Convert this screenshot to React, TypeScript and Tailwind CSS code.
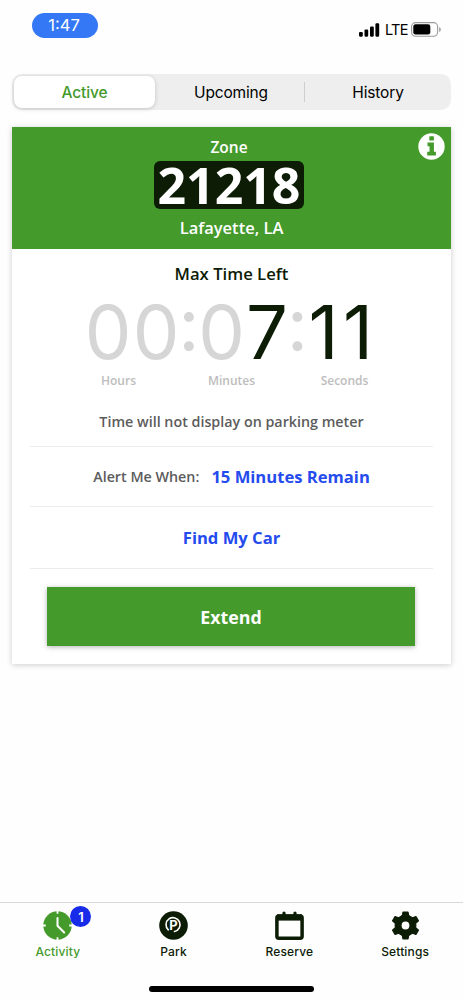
import { useState, type ReactNode } from "react";
import clsx from "clsx";

const TABS = ["Active", "Upcoming", "History"];

/* chaque caractère a sa propre largeur de cellule */
const TIMER = [
  { char: "0", cell: "w-12 text-[#d6d6d6]" },
  { char: "0", cell: "w-12 text-[#d6d6d6]" },
  { char: ":", cell: "w-[18px] -mt-[8px] text-[#d6d6d6]" },
  { char: "0", cell: "w-[47px] text-[#d6d6d6]" },
  { char: "7", cell: "w-[44px] text-[#0c1c05]" },
  { char: ":", cell: "w-[17px] -mt-[8px] text-[#d6d6d6]" },
  { char: "1", cell: "w-[35px] text-[#0c1c05]" },
  { char: "1", cell: "w-[34px] text-[#0c1c05]" },
];

/* ── Icons ── */
function SignalIcon() {
  return (
    <svg width="21" height="14" viewBox="0 0 21 14" fill="#000">
      <rect x="0" y="9" width="3.8" height="4.7" rx="1.1" />
      <rect x="5.5" y="6.5" width="3.7" height="7.2" rx="1.1" />
      <rect x="11" y="3.5" width="3.8" height="10.2" rx="1.1" />
      <rect x="16.4" y="0.3" width="3.8" height="13.4" rx="1.1" />
    </svg>
  );
}

function BatteryIcon() {
  return (
    <svg width="31" height="15" viewBox="0 0 31 15">
      <rect x="0.6" y="0.6" width="26" height="13.6" rx="4" fill="none" stroke="#9b9b9b" strokeWidth="1.1" />
      <rect x="2.3" y="2.3" width="17" height="10.2" rx="2.3" fill="#000" />
      <path d="M28.2 5v5c1.1-.4 1.6-1.3 1.6-2.5S29.3 5.4 28.2 5z" fill="#9b9b9b" />
    </svg>
  );
}

function InfoIcon() {
  return (
    <svg width="27" height="27" viewBox="0 0 27 27">
      <circle cx="13.5" cy="13.5" r="13.2" fill="#fff" />
      <rect x="11.3" y="3.3" width="4.6" height="4.2" rx="0.5" fill="#449a2b" />
      <path d="M9.5 9.5h6.4v9.300h2v3.700H9.200v-3.700h2.300v-5.600h-2z" fill="#449a2b" />
    </svg>
  );
}

function ClockIcon() {
  return (
    <svg width="29" height="29" viewBox="0 0 29 29">
      <circle cx="14.5" cy="14.5" r="14.2" fill="#449a2b" />
      <path d="M14.5 0v2.8M14.5 26.2V29M0 14.5h2.8M26.2 14.5H29" stroke="#fff" strokeWidth="1.8" />
      <path d="M14.5 7v7.8l6.7 6.700" fill="none" stroke="#fff" strokeWidth="2" strokeLinecap="round" />
    </svg>
  );
}

function ParkIcon() {
  return (
    <svg width="29" height="29" viewBox="0 0 29 29">
      <circle cx="14.5" cy="14.5" r="14.3" fill="#0c1c05" />
      <path d="M9.300 18.800A7 7 0 1 1 15.500 20.500" fill="none" stroke="#fff" strokeWidth="1.600" strokeLinecap="round" />
      <text x="14.5" y="19.400" textAnchor="middle" fontSize="13" fontWeight="700" fill="#fff" fontFamily="Inter, sans-serif">P</text>
    </svg>
  );
}

function CalendarIcon() {
  return (
    <svg width="29" height="29" viewBox="0 0 29 29" fill="none" stroke="#0c1c05">
      <rect x="1.9" y="5" width="25.2" height="22.2" rx="2" strokeWidth="3.5" />
      <path d="M2 6.500h25" strokeWidth="6.200" />
      <path d="M9 2v4M20 2v4" strokeWidth="3.200" strokeLinecap="round" />
    </svg>
  );
}

function GearIcon() {
  return (
    <svg width="29" height="29" viewBox="0 0 29 29">
      <g fill="#0c1c05" stroke="#0c1c05" strokeLinejoin="round">
        <circle cx="14.5" cy="14.5" r="10.5" />
        {[0, 60, 120].map((a) => (
          <path key={a} d="M12 1h5l1 5h-7zM12 28h5l1-5h-7z" transform={`rotate(${a} 14.5 14.5)`} strokeWidth="1.2" />
        ))}
      </g>
      <circle cx="14.5" cy="14.5" r="3.900" fill="#fefefe" />
    </svg>
  );
}

const NAV: { label: string; icon: ReactNode; badge?: number }[] = [
  { label: "Activity", icon: <ClockIcon />, badge: 1 },
  { label: "Park", icon: <ParkIcon /> },
  { label: "Reserve", icon: <CalendarIcon /> },
  { label: "Settings", icon: <GearIcon /> },
];

function StatusBar() {
  return (
    <div className="flex h-[74px] items-start justify-between pl-8 pr-[21px] pt-[13px]">
      <span className="flex h-[25px] w-[66px] items-center justify-center rounded-full bg-[#3478f6] pr-[2px] text-[16.5px] text-white">
        1:47
      </span>
      <div className="mt-[9px] flex items-center">
        <SignalIcon />
        <span className="ml-[5px] w-[26px] text-[14.5px] leading-[15px] tracking-[-0.7px]">LTE</span>
        <BatteryIcon />
      </div>
    </div>
  );
}

function Timer() {
  return (
    <div>
      <div className="ml-[72px] flex h-[68px] text-[74px] leading-[66px] font-normal">
        {TIMER.map((t, i) => (
          <span key={i} className={clsx("flex justify-center", t.cell)}>
            {t.char}
          </span>
        ))}
      </div>
      <div className="mt-[6px] ml-[50px] flex font-['Open_Sans'] text-xs leading-4 font-semibold text-[#bdbdbd]">
        <span className="w-[113px] text-center">Hours</span>
        <span className="w-[113px] text-center">Minutes</span>
        <span className="w-[113px] text-center">Seconds</span>
      </div>
    </div>
  );
}

function SessionCard() {
  return (
    <section className="mx-3 mt-[17px] h-[537px] bg-white font-['Open_Sans'] shadow-[0_1px_6px_rgba(0,0,0,0.2)]">
      <header className="relative flex h-[122px] flex-col items-center bg-[#449a2b] pr-[5px] text-white">
        <p className="mt-[10px] text-[15.5px] leading-5 font-semibold">Zone</p>
        <p className="mt-1 h-12 w-[150px] rounded-md bg-[#0c1c05] text-center text-[50px] leading-[48px] font-bold">
          21218
        </p>
        <p className="mt-[9px] pl-[5px] text-[16.5px] leading-5 font-semibold">Lafayette, LA</p>
        <div className="absolute top-[6px] right-[6px]">
          <InfoIcon />
        </div>
      </header>

      <h2 className="mt-[14px] text-center text-[16.7px] leading-[22px] font-semibold text-[#0c1c05]">Max Time Left</h2>
      <div className="mt-[14px] font-['Inter']">
        <Timer />
      </div>

      <div className="mx-[18px] flex flex-col items-center">
        <p className="mt-[23px] h-[34px] text-[14.3px] leading-5 font-semibold text-[#5c5c5c]">
          Time will not display on parking meter
        </p>
        <div className="flex h-[61px] w-full items-center justify-center border-y border-[#ececec] pt-px">
          <span className="text-[14.3px] font-semibold text-[#5c5c5c]">Alert Me When:</span>
          <a className="ml-3 text-[16.6px] font-bold text-[#244bed]">15 Minutes Remain</a>
        </div>
        <a className="flex h-[62px] w-full items-center justify-center border-b border-[#ececec] pt-[2px] text-[16.6px] font-bold text-[#244bed]">
          Find My Car
        </a>
      </div>

      <button className="mt-[18px] ml-[35px] h-[59px] w-[368px] bg-[#449a2b] pt-[2px] text-[17.8px] font-bold text-white shadow-[0_1px_5px_rgba(0,0,0,0.3)]">
        Extend
      </button>
    </section>
  );
}

export default function App() {
  const [active, setActive] = useState("Active");

  return (
    <div className="flex h-[1001px] w-[463px] flex-col overflow-hidden bg-[#fefefe] font-['Inter'] text-black">
      <StatusBar />

      {/* ── Onglets ── */}
      <div className="mx-3 flex h-9 items-center rounded-[10px] bg-[#eeeeee] px-[2px]">
        {TABS.map((tab, i) => (
          <button
            key={tab}
            onClick={() => setActive(tab)}
            className={clsx(
              "pt-px text-[15.5px] tracking-[-0.15px]",
              i === 0 && "h-8 w-[141px]",
              i === 1 && "h-8 w-[149px] pl-[3px]",
              i === 2 && "h-5 flex-1 border-l border-[#cfcfcf] pl-[2px] leading-5",
              active === tab && "rounded-lg bg-white font-medium text-[#449a2b] shadow-[0_1px_4px_rgba(0,0,0,0.18)]"
            )}
          >
            {tab}
          </button>
        ))}
      </div>

      <SessionCard />

      {/* ── Navigation ── */}
      <nav className="mt-auto flex h-[99px] flex-col items-center border-t border-[#d9d9d9]">
        <div className="flex w-full">
          {NAV.map((item) => (
            <a
              key={item.label}
              className={clsx(
                "flex w-1/4 flex-col items-center text-xs leading-4 font-medium",
                item.badge ? "text-[#449a2b]" : "text-[#0c1c05]"
              )}
            >
              <span className="relative mt-2 flex h-[29px] w-[29px] items-center justify-center">
                {item.icon}
                {item.badge && (
                  <span className="absolute -top-[5px] left-[27px] flex h-[21px] w-[21px] items-center justify-center rounded-full bg-[#182be8] text-[13px] font-semibold text-white">
                    {item.badge}
                  </span>
                )}
              </span>
              <span className="mt-1 tracking-[0.15px]">{item.label}</span>
            </a>
          ))}
        </div>
        <div className="mt-[26px] h-[6px] w-[165px] rounded-full bg-black" />
      </nav>
    </div>
  );
}
